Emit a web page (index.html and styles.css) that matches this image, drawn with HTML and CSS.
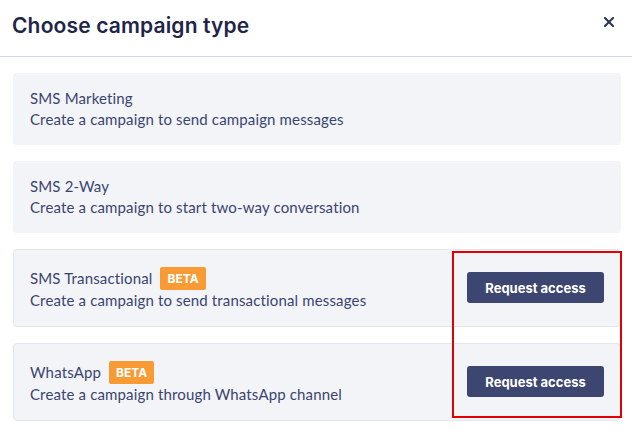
FILE: index.html
```html
<!DOCTYPE html>
<html lang="en">
<head>
  <meta charset="UTF-8">
  <meta name="viewport" content="width=device-width, initial-scale=1.0">
  <title>Choose campaign type</title>
  <link rel="stylesheet" href="styles.css">
</head>
<body>

<div id="modal">
  <div class="modal-header">
    <h1 class="modal-title">Choose campaign type</h1>
    <button class="close-btn" aria-label="Close">
      <svg width="10" height="10" viewBox="0 0 10 10">
        <path d="M1 1 L9 9 M9 1 L1 9" stroke="#2b3357" stroke-width="2" stroke-linecap="square"/>
      </svg>
    </button>
  </div>

  <div class="type-list">
    <div class="type-card">
      <div class="type-info">
        <div class="type-name">SMS Marketing</div>
        <div class="type-desc">Create a campaign to send campaign messages</div>
      </div>
    </div>

    <div class="type-card">
      <div class="type-info">
        <div class="type-name">SMS 2-Way</div>
        <div class="type-desc">Create a campaign to start two-way conversation</div>
      </div>
    </div>

    <div class="type-card locked">
      <div class="type-info">
        <div class="type-name">SMS Transactional <span class="badge">BETA</span></div>
        <div class="type-desc">Create a campaign to send transactional messages</div>
      </div>
      <button class="request-btn">Request access</button>
    </div>

    <div class="type-card locked">
      <div class="type-info">
        <div class="type-name">WhatsApp <span class="badge">BETA</span></div>
        <div class="type-desc">Create a campaign through WhatsApp channel</div>
      </div>
      <button class="request-btn">Request access</button>
    </div>

    <!-- highlight box drawn over the buttons -->
    <div class="highlight"></div>
  </div>
</div>

</body>
</html>
```

FILE: styles.css
```css
* {
  box-sizing: border-box;
  margin: 0;
  padding: 0;
}

body {
  background-color: #ffffff;
  font-family: 'Lato', sans-serif;
  color: #3b4470;
}

#modal {
  width: 632px;
  height: 434px;
  overflow: hidden;
}

.modal-header {
  display: flex;
  align-items: center;
  justify-content: space-between;
  height: 57px;
  padding: 0 18px 0 12px;
  border-bottom: 1px solid #cfd9e5;
}

.modal-title {
  font-family: 'Inter', sans-serif;
  font-size: 21px;
  font-weight: 600;
  color: #1f2549;
  letter-spacing: 0.15px;
  margin-top: -6px;
}

.close-btn {
  display: flex;
  background: none;
  border: none;
  margin-top: -13px;
  cursor: pointer;
}

.type-list {
  position: relative;
  display: flex;
  flex-direction: column;
  gap: 16px;
  padding: 16px 11px 0 13px;
}

.type-card {
  display: flex;
  align-items: center;
  justify-content: space-between;
  min-height: 72px;
  padding: 15px 17px;
  background-color: #f3f4f8;
  border-radius: 4px;
}

.type-card.locked {
  min-height: 78px;
  border: 1px solid #e2e6ee;
  padding: 16px 16px 15px 16px;
}

.type-name,
.type-desc {
  font-size: 15px;
  line-height: 21px;
  letter-spacing: 0.15px;
}

.type-name {
  display: flex;
  align-items: center;
  gap: 8px;
}

.locked .type-name {
  height: 24px;
}

.badge {
  display: inline-block;
  background-color: #f89b35;
  color: #ffffff;
  font-family: 'Inter', sans-serif;
  font-size: 12px;
  font-weight: 700;
  line-height: 23px;
  letter-spacing: 0;
  padding: 0 7px;
  border-radius: 2px;
}

.request-btn {
  width: 137px;
  height: 31px;
  margin-top: -2px;
  background-color: #3d4670;
  color: #ffffff;
  border: none;
  border-radius: 3px;
  font-family: 'Inter', sans-serif;
  font-size: 13px;
  font-weight: 700;
  cursor: pointer;
}

.highlight {
  position: absolute;
  left: 452px;
  top: 194px;
  width: 170px;
  height: 167px;
  border: 2px solid #e00000;
  pointer-events: none;
}
```
